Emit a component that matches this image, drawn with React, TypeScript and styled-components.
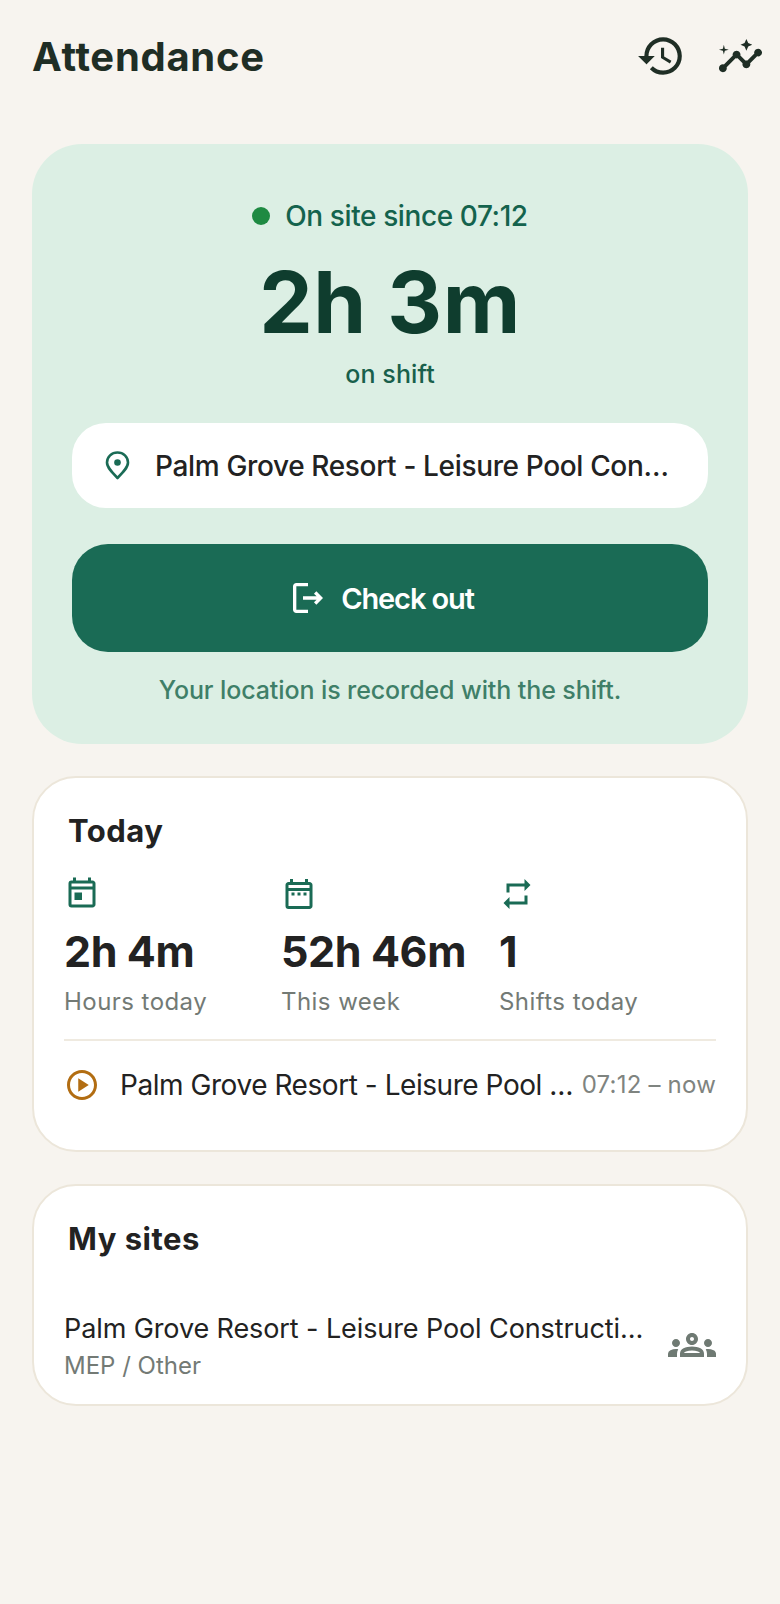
import React from "react";
import styled, { createGlobalStyle } from "styled-components";
import { MdHistory, MdInsights, MdOutlineLogout, MdOutlineToday, MdOutlineDateRange, MdRepeat, MdOutlinePlayCircle, MdOutlineGroups } from "react-icons/md";

const Global = createGlobalStyle`
  html, body { margin: 0; padding: 0; background: #f7f4ef; }
  body { font-family: Inter, "Liberation Sans", sans-serif; -webkit-font-smoothing: antialiased; }
  * { box-sizing: border-box; }
`;

const Page = styled.div`
  width: 780px;
  min-height: 1604px;
  background: #f7f4ef;
  display: flex;
  flex-direction: column;
`;

const Header = styled.header`
  height: 112px;
  padding: 0 16px 0 32px;
  display: flex;
  align-items: center;
  justify-content: space-between;
`;

const Title = styled.h1`
  margin: 1px 0 0;
  font-size: 40px;
  line-height: 48px;
  font-weight: 700;
  color: #1f2e25;
  letter-spacing: 0.7px;
`;

const HeaderIcons = styled.div`
  display: flex;
  align-items: center;
  gap: 31px;
  color: #1f2e25;
`;

const Content = styled.main`
  padding: 32px 32px 0;
  display: flex;
  flex-direction: column;
`;

const Hero = styled.section`
  height: 600px;
  padding: 52px 40px 38px;
  background: #dcefe4;
  border-radius: 50px;
  display: flex;
  flex-direction: column;
  align-items: center;
`;

const Status = styled.div`
  display: flex;
  align-items: center;
  gap: 15px;
  height: 40px;
  font-size: 28px;
  font-weight: 500;
  color: #14634d;
  letter-spacing: -0.4px;
`;

const Dot = styled.span`
  width: 18px;
  height: 18px;
  border-radius: 50%;
  background: #1e8a42;
`;

const BigTime = styled.div`
  margin-top: 25px;
  font-size: 85px;
  line-height: 84px;
  font-weight: 700;
  color: #0f3d2e;
  letter-spacing: 0.5px;
`;

const OnShift = styled.div`
  margin-top: 13px;
  font-size: 25px;
  line-height: 32px;
  font-weight: 500;
  color: #18604b;
  letter-spacing: 0.1px;
`;

const SitePill = styled.div`
  margin-top: 33px;
  width: 100%;
  height: 85px;
  padding: 0 26px 0 33px;
  background: #fff;
  border-radius: 34px;
  display: flex;
  align-items: center;
  gap: 25px;
`;

const SiteName = styled.span`
  flex: 1;
  min-width: 0;
  white-space: nowrap;
  overflow: hidden;
  text-overflow: ellipsis;
  font-size: 28px;
  line-height: 36px;
  font-weight: 500;
  color: #222;
  letter-spacing: -0.35px;
`;

const CheckOut = styled.button`
  margin-top: 36px;
  width: 100%;
  height: 108px;
  border: 0;
  padding: 0 18px 0 0;
  border-radius: 36px;
  background: #1a6b55;
  color: #fff;
  display: flex;
  align-items: center;
  justify-content: center;
  gap: 13px;
  font-family: inherit;
  font-size: 29px;
  font-weight: 600;
  letter-spacing: -1.1px;
`;

const Note = styled.p`
  margin: 22px 0 0;
  font-size: 25px;
  line-height: 32px;
  font-weight: 500;
  color: #3f7f68;
  letter-spacing: -0.1px;
`;

const Card = styled.section<{ $height: number }>`
  height: ${(p) => p.$height}px;
  margin-top: 32px;
  background: #fff;
  border: 2px solid #ece6da;
  border-radius: 44px;
  display: flex;
  flex-direction: column;
  padding: 0 30px;
`;

const CardTitle = styled.h2`
  margin: 35px 0 0 4px;
  font-size: 31px;
  line-height: 36px;
  font-weight: 700;
  color: #222;
  letter-spacing: 0.5px;
`;

const Stats = styled.div`
  margin-top: 27px;
  display: grid;
  grid-template-columns: 217px 218px 217px;
`;

const Stat = styled.div`
  display: flex;
  flex-direction: column;
  align-items: flex-start;
`;

const StatIcon = styled.div`
  height: 36px;
  color: #1a6b55;
  display: flex;
`;

const StatValue = styled.div`
  margin-top: 15px;
  font-size: 43px;
  line-height: 48px;
  font-weight: 700;
  color: #222;
  white-space: nowrap;
  letter-spacing: -0.4px;
`;

const StatLabel = styled.div`
  margin-top: 11px;
  font-size: 24px;
  line-height: 32px;
  color: #737a75;
  letter-spacing: 0.45px;
`;

const Divider = styled.hr`
  margin: 21px 0 0;
  border: 0;
  height: 2px;
  background: #efeae0;
`;

const SessionRow = styled.div`
  margin-top: 26px;
  height: 36px;
  display: flex;
  align-items: center;
  gap: 8px;
`;

const PlayIcon = styled.div`
  width: 36px;
  margin-right: 12px;
  display: flex;
  color: #b26d12;
`;

const SessionName = styled.span`
  flex: 1;
  min-width: 0;
  white-space: nowrap;
  overflow: hidden;
  text-overflow: ellipsis;
  font-size: 28px;
  line-height: 36px;
  color: #222;
  letter-spacing: -0.45px;
`;

const SessionTime = styled.span`
  font-size: 24px;
  line-height: 36px;
  color: #7f8480;
  white-space: nowrap;
  letter-spacing: 0.2px;
`;

const SiteRow = styled.div`
  margin-top: 54px;
  display: flex;
  align-items: center;
  gap: 24px;
`;

const SiteInfo = styled.div`
  flex: 1;
  min-width: 0;
`;

const SiteTitle = styled.div`
  white-space: nowrap;
  overflow: hidden;
  text-overflow: ellipsis;
  font-size: 27px;
  line-height: 36px;
  color: #222;
  letter-spacing: -0.1px;
`;

const SiteSub = styled.div`
  margin-top: 3px;
  font-size: 24px;
  line-height: 32px;
  color: #737a75;
`;

const GroupIcon = styled.div`
  display: flex;
  margin-bottom: 3px;
  color: #6f7a73;
`;

const Pin = () => (
  <svg width="25" height="29" viewBox="0 0 25 29" fill="none" style={{ flex: "none" }}>
    <path d="M12.5 27 C7 21.5 2 16.5 2 11.5 C2 5.7 6.700 1.500 12.500 1.500 C18.300 1.500 23 5.700 23 11.500 C23 16.500 18 21.500 12.500 27 Z" stroke="#1a6b55" strokeWidth="2.600" strokeLinejoin="round" />
    <circle cx="12.500" cy="11.500" r="3.300" fill="#1a6b55" />
  </svg>
);

export default function App() {
  return (
    <Page>
      <Global />
      <Header>
        <Title>Attendance</Title>
        <HeaderIcons>
          <MdHistory size={50} />
          <MdInsights size={47} />
        </HeaderIcons>
      </Header>
      <Content>
        <Hero>
          <Status><Dot />On site since 07:12</Status>
          <BigTime>2h 3m</BigTime>
          <OnShift>on shift</OnShift>
          <SitePill>
            <Pin />
            <SiteName>Palm Grove Resort - Leisure Pool Construction</SiteName>
          </SitePill>
          <CheckOut><MdOutlineLogout size={40} />Check out</CheckOut>
          <Note>Your location is recorded with the shift.</Note>
        </Hero>
        <Card $height={376}>
          <CardTitle>Today</CardTitle>
          <Stats>
            <Stat>
              <StatIcon><MdOutlineToday size={36} /></StatIcon>
              <StatValue>2h 4m</StatValue>
              <StatLabel>Hours today</StatLabel>
            </Stat>
            <Stat>
              <StatIcon><MdOutlineDateRange size={36} /></StatIcon>
              <StatValue>52h 46m</StatValue>
              <StatLabel>This week</StatLabel>
            </Stat>
            <Stat>
              <StatIcon><MdRepeat size={36} /></StatIcon>
              <StatValue>1</StatValue>
              <StatLabel>Shifts today</StatLabel>
            </Stat>
          </Stats>
          <Divider />
          <SessionRow>
            <PlayIcon><MdOutlinePlayCircle size={36} /></PlayIcon>
            <SessionName>Palm Grove Resort - Leisure Pool Construction</SessionName>
            <SessionTime>07:12 – now</SessionTime>
          </SessionRow>
        </Card>
        <Card $height={222}>
          <CardTitle>My sites</CardTitle>
          <SiteRow>
            <SiteInfo>
              <SiteTitle>Palm Grove Resort - Leisure Pool Construction</SiteTitle>
              <SiteSub>MEP / Other</SiteSub>
            </SiteInfo>
            <GroupIcon><MdOutlineGroups size={48} /></GroupIcon>
          </SiteRow>
        </Card>
      </Content>
    </Page>
  );
}
